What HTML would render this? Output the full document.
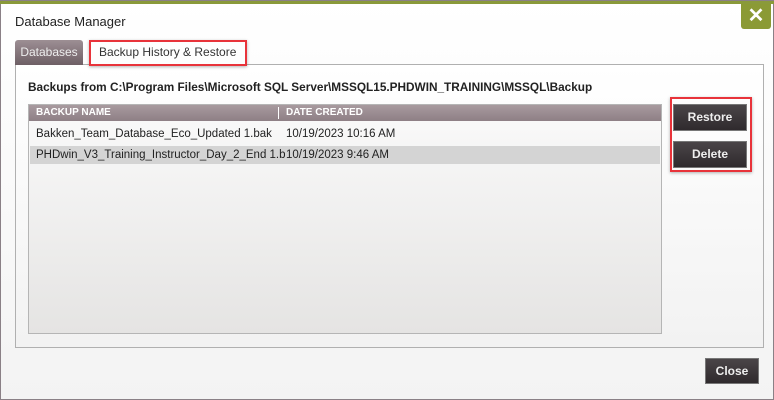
<!DOCTYPE html>
<html><head><style>
*{margin:0;padding:0;box-sizing:border-box}
body{width:774px;height:400px;overflow:hidden;background:#fff;font-family:"Liberation Sans",sans-serif;position:relative}
.frame{position:absolute;left:0;top:0;width:774px;height:400px;border:1px solid #8a8086;border-top:none;background:linear-gradient(#fff 0%,#f3f3f3 100%)}
.topbar{position:absolute;left:0;top:0;width:774px;height:4px;background:#8a9a3a;border-top:1px solid #8a8086}
.x{position:absolute;left:741px;top:4px;width:30px;height:25px;background:#8b9a35;border-radius:0 0 3px 3px;color:#fff;font-weight:bold;font-size:20px;text-align:center;line-height:24px}
.title{position:absolute;left:15px;top:14px;font-size:13px;color:#222}
.tab1{position:absolute;left:15px;top:40px;width:68px;height:25px;background:linear-gradient(#9d8f94,#6e5f65);border-radius:3px 3px 0 0;color:#eee;font-size:12px;line-height:24px;text-align:center}
.tab2{position:absolute;left:99px;top:45px;font-size:12px;color:#333}
.red1{position:absolute;left:89px;top:40px;width:158px;height:26px;border:2px solid #e8333a;box-shadow:0 1px 3px rgba(0,0,0,.3)}
.panel{position:absolute;left:15px;top:64px;width:749px;height:284px;border:1px solid #b0b0b0;background:linear-gradient(#fff,#f2f2f2)}
.path{position:absolute;left:28px;top:80px;font-size:11.8px;font-weight:bold;color:#222}
.grid{position:absolute;left:28px;top:104px;width:634px;height:230px;border:1px solid #b5b5b5;background:linear-gradient(#fafafa,#e5e4e3)}
.hdr{position:absolute;left:0;top:0;width:632px;height:16px;background:linear-gradient(#a89a9f,#8e7f85);color:#fff;font-size:10px;font-weight:bold;line-height:16px}
.row{position:absolute;left:1px;width:630px;height:18px;font-size:11.5px;color:#222;line-height:18px;white-space:nowrap;overflow:hidden}
.c1{position:absolute;left:6px;width:249px;overflow:hidden}
.c2{position:absolute;left:256px}
.btn{position:absolute;background:linear-gradient(#4a4548,#2f2a2d);color:#eee;font-size:12px;font-weight:bold;text-align:center;border:1px solid #777}
.red2{position:absolute;left:670px;top:97px;width:82px;height:75px;border:2px solid #e8333a;box-shadow:0 1px 3px rgba(0,0,0,.3)}
</style></head><body>
<div class="frame"></div>
<div class="topbar"></div>
<div class="x">✕</div>
<div class="title">Database Manager</div>
<div class="panel"></div>
<div class="tab1">Databases</div>
<div class="tab2">Backup History &amp; Restore</div>
<div class="red1"></div>
<div class="path">Backups from C:\Program Files\Microsoft SQL Server\MSSQL15.PHDWIN_TRAINING\MSSQL\Backup</div>
<div class="grid">
<div class="hdr"><span style="position:absolute;left:7px">BACKUP NAME</span><span style="position:absolute;left:249px;top:2px;width:1px;height:12px;background:#fff"></span><span style="position:absolute;left:257px">DATE CREATED</span></div>
<div class="row" style="top:20px"><span class="c1">Bakken_Team_Database_Eco_Updated 1.bak</span><span class="c2">10/19/2023 10:16 AM</span></div>
<div class="row" style="top:41px;background:#d4d4d4"><span class="c1">PHDwin_V3_Training_Instructor_Day_2_End 1.bak</span><span class="c2">10/19/2023 9:46 AM</span></div>
</div>
<div class="red2"></div>
<div class="btn" style="left:673px;top:104px;width:74px;height:27px;line-height:25px">Restore</div>
<div class="btn" style="left:673px;top:141px;width:74px;height:27px;line-height:25px">Delete</div>
<div class="btn" style="left:705px;top:358px;width:54px;height:26px;line-height:24px">Close</div>
</body></html>
